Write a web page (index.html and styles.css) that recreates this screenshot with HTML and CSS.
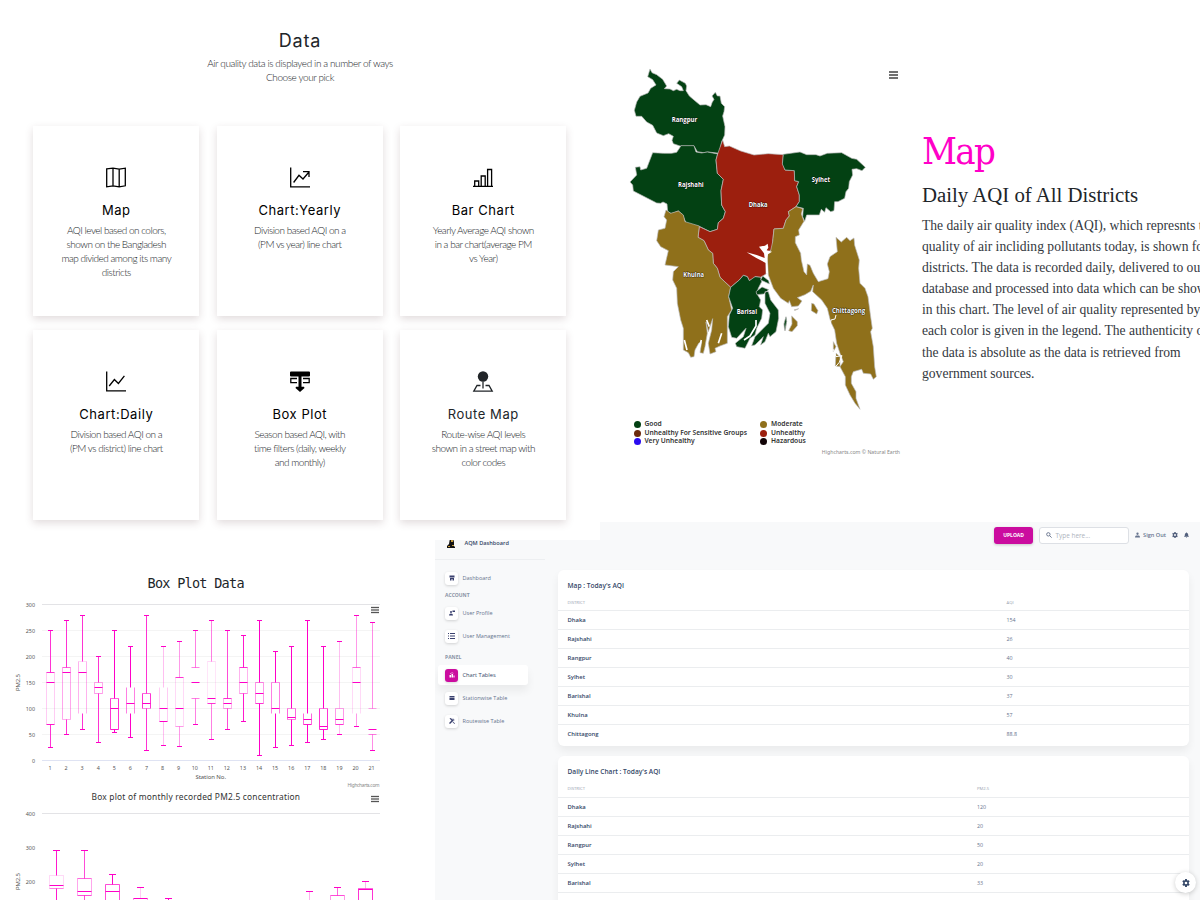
FILE: index.html
```html
<!DOCTYPE html>
<html lang="en">
<head>
<meta charset="utf-8">
<title>Air Quality</title>
<link rel="stylesheet" href="styles.css">
</head>
<body>
<main class="page">
<section class="data">
  <h1 class="data-title">Data</h1>
  <p class="data-lead">Air quality data is displayed in a number of ways<br>Choose your pick</p>
  <div class="cards">
    <article class="card"><svg class="card-icon" viewBox="0 0 20 20"><path d="M.7 1.4 7 .7l6.2 1 6.1-1v17.6l-6.1 1-6.2-1-6.3 1zM7 .7v17.6M13.2 1.7v17.6"/></svg><h2>Map</h2><p>AQI level based on colors,<br>shown on the Bangladesh<br>map divided among its many<br>districts</p></article>
    <article class="card"><svg class="card-icon" viewBox="0 0 20 20"><path d="M.7 0v19.3H20M3.6 15 9 7.8l4 3.7 6-7M13 4.2h6v5.3"/></svg><h2>Chart:Yearly</h2><p>Division based AQI on a<br>(PM vs year) line chart</p></article>
    <article class="card"><svg class="card-icon" viewBox="0 0 20 20"><path d="M0 18.8h20M1.7 18.5v-5h4v5M8.2 18.5v-10h4v10M14.6 18.5V2h4v16.5"/></svg><h2>Bar Chart</h2><p>Yearly Average AQI shown<br>in a bar chart(average PM<br>vs Year)</p></article>
    <article class="card"><svg class="card-icon" viewBox="0 0 20 20"><path d="M.7 0v19.3H20M3.2 14.5 8.4 8l4 4 6-7.6"/></svg><h2>Chart:Daily</h2><p>Division based AQI on a<br>(PM vs district) line chart</p></article>
    <article class="card"><svg class="card-icon" viewBox="0 0 20 20"><path d="M7 7H.8v4.200H7M13 7h6.200v4.200H13"/><path class="solid" d="M1 0h18q1 0 1 1v3q0 1-1 1h-7.500v10.200H14l.5 1.300L10 20.500l-4.500-4 .5-1.300h2.500V5H1Q0 5 0 4V1q0-1 1-1z"/></svg><h2>Box Plot</h2><p>Season based AQI, with<br>time filters (daily, weekly<br>and monthly)</p></article>
    <article class="card soft"><svg class="card-icon" viewBox="0 0 20 20"><circle class="solid" cx="10" cy="5" r="5.200"/><path d="M10 10v7M7.500 14H4L.8 19.600h18.400L16 14h-3.500"/></svg><h2>Route Map</h2><p>Route-wise AQI levels<br>shown in a street map with<br>color codes</p></article>
  </div>
</section>

<section class="map">
  <div class="map-figure">
    <svg class="menu" viewBox="0 0 9 8"><path d="M0 1h9M0 4h9M0 7h9"/></svg>
    <svg class="country" viewBox="0 0 840 1060">
      <path class="good" d="M83 50 90 27l6 11 14 6 18 14 12 20-7 8 17 1 10 5 10-4 10 4h10l-5-12-15-10 8-10 18 10 4 8-2 14 10 16 14 12 18 15 18-1 14 6 4-12 6-10-6-10 10-11 6 11h8l4 22 10 10-2 15-4 13 7 32-1 25-9 20-7 35-34-4-14 2-18-3-10-17h-42l-20-7-4-10 4-12-14-8-16 6-20-8-12-23-18-10-15-17H48l-5-18 7-25 10-17 24-10 8-14 16-10-10-16z"/>
      <path class="good" d="m180 262 3-5h39l6 19 17 3 17-3 31 6-5 18 4 40 18 18-7 34 2 43 11 20-6 20-15 13-3 20-22 7-30-15-40-6-12-29-13-12-20 8-12-6-2-23-12-6-7 4-12-1-70-36-2-18-8-9 20-21-4-23 14-2 2 10 18-5 18-47 32 2h25l15-3z"/>
      <path class="bad" d="M308 240 314 260 328 258 362 273 402 285 445 281 490 284 488 310 495 330 523 332 524 362 536 365 530 380 538 405 538 425 528 440 505 455 508 468 498 480 490 505 462 507 458 545 460 560 452 572 438 576 438 642 422 652 405 650 398 658 388 662 382 650 370 646 358 660 332 682 300 652 292 625 280 610 278 580 265 570 252 542 234 532 238 500 270 515 292 508 295 488 310 475 316 455 305 435 303 392 310 358 292 340 288 300 293 282 300 262Z"/>
      <g transform="translate(360)">
        <path class="good" d="M130 283 180 276 200 284 228 284 240 288 262 280 305 278 335 295 350 298 376 322 366 332 350 326 336 328 338 345 328 365 326 385 318 395 314 415 294 425 284 425 282 452 272 455 258 443 254 457 244 448 238 465 200 465 194 484 188 470 190 445 168 440 178 425 178 405 170 380 176 365 164 362 163 332 135 330 127 312Z"/>
        <path class="moderate" d="M168 440 188 446 184 462 192 484 176 510 178 525 166 530 166 548 182 580 184 600 192 635 200 645 202 612 210 616 220 640 235 665 264 656 268 635 262 612 270 590 292 575 288 532 304 546 320 532 330 542 342 534 344 556 358 600 356 625 360 670 375 685 384 710 392 770 397 805 392 815 400 860 404 920 409 950 400 958 392 942 370 940 365 928 340 935 334 950 334 970 348 995 348 1015 360 1048 345 1030 330 1005 316 975 316 950 300 920 310 905 300 880 290 850 284 810 272 785 262 745 245 720 218 695 220 675 212 694 195 704 172 713 186 723 175 738 155 740 148 722 145 730 122 715 100 685 85 645 82 600 78 580 92 572 98 545 102 507 130 505 138 480 148 468 145 455Z"/>
        <path class="moderate" d="m155 768 17 17v12l-16 18-10-3 10-20zM215 730l7 2 12 20-4 10-16-10zM280 845l8 15-8 15zM288 880l12 10v30l-14-2zM162 750l14-4-10 5z"/>
        <path class="good" d="m138 772 2 12-4 28-4-20z"/>
      </g>
      <g transform="translate(60 420)">
        <path class="moderate" d="M78 30 92 40 115 33 130 45 135 65 178 78 174 112 192 122 205 150 218 160 220 190 232 205 240 232 272 262 266 290 275 330 262 350 262 430 240 438 225 445 228 455 210 462 205 430 215 390 218 356 205 395 198 366 202 400 195 440 190 460 180 458 185 425 176 430 165 450 162 470 152 472 145 458 130 450 130 385 122 360 112 310 110 265 98 240 100 215 115 200 75 195 85 152 62 140 50 122 55 90 75 85 80 60 72 50Z"/>
        <path class="good" d="M272 262 298 240 310 226 322 230 328 242 345 230 362 232 365 245 355 265 350 280 362 300 358 320 368 330 365 355 350 385 345 405 330 415 315 445 290 440 286 430 310 410 318 385 290 415 275 412 265 380 268 345 278 325 266 290Z"/>
        <path class="good" d="M375 275 385 275 392 300 415 330 416 355 408 395 390 410 385 400 375 425 362 435 370 410 345 435 335 437 345 410 370 385 385 370 390 340 375 310ZM368 228l18 14 2 10-26-12zM348 275l18-14 20 8-15 13-20 2zM438 350l2 14-6 28-2-20z"/>
        <path class="water" d="m320 157 30 8 24 9-2-14-15-20 18-3 8-6 2 12-5 8 16 4-12 8-2 20 2 37-6-1-1-30-28-15z"/>
        <path class="creek" d="M348 360v18l-18 30-18 12M200 360l8 20M184 420l-8 30M245 400l-10 30M133 420l8 30"/>
      </g>
      <path class="creek thin" d="m648 765-3 12-12 3-2 12M640 868l8 22 18-3-8 20-12 14"/>
      <g class="labels">
        <text x="155" y="185" textLength="77" lengthAdjust="spacingAndGlyphs">Rangpur</text><text x="174" y="382" textLength="77" lengthAdjust="spacingAndGlyphs">Rajshahi</text><text x="386" y="441" textLength="57" lengthAdjust="spacingAndGlyphs">Dhaka</text><text x="575" y="367" textLength="55" lengthAdjust="spacingAndGlyphs">Sylhet</text><text x="190" y="651" textLength="62" lengthAdjust="spacingAndGlyphs">Khulna</text><text x="350" y="761" textLength="61" lengthAdjust="spacingAndGlyphs">Barisal</text><text x="636" y="759" textLength="100" lengthAdjust="spacingAndGlyphs">Chittagong</text>
      </g>
    </svg>
    <ul class="legend">
      <li><i class="dot d-good"></i>Good</li><li><i class="dot d-moderate"></i>Moderate</li>
      <li><i class="dot d-sensitive"></i>Unhealthy For Sensitive Groups</li><li><i class="dot d-bad"></i>Unhealthy</li>
      <li><i class="dot d-very"></i>Very Unhealthy</li><li><i class="dot d-hazard"></i>Hazardous</li>
    </ul>
    <p class="map-credit">Highcharts.com © Natural Earth</p>
  </div>
  <div class="map-text">
    <h2>Map</h2>
    <h3>Daily AQI of All Districts</h3>
    <p>The daily air quality index (AQI), which represnts the<br>quality of air incliding pollutants today, is shown for all<br>districts. The data is recorded daily, delivered to our<br>database and processed into data which can be shown<br>in this chart. The level of air quality represented by<br>each color is given in the legend. The authenticity of<br>the data is absolute as the data is retrieved from<br>government sources.</p>
  </div>
</section>

<section class="plots">
  <h2>Box Plot Data</h2>
  <svg class="chart" id="stations" viewBox="0 595 400 195"></svg>
  <svg class="chart" id="months" viewBox="0 790 400 110"></svg>
</section>

<section class="dash">
  <aside class="side">
    <div class="brand"><svg viewBox="0 0 8 10"><path d="M3 0h3l1 4v4l1 1v1H0V8l2-2z"/><path class="gold" d="M4 2h2v2H4zM1 8h2v1H1zM5 7h2v1H5z"/></svg><span>AQM Dashboard</span></div>
    <nav>
      <a class="item"><i class="tile"><svg viewBox="0 0 12 12"><path d="M1 1h10v4H1zM2 6h8v5H7V8H5v3H2z"/></svg></i><span>Dashboard</span></a>
      <h4>ACCOUNT</h4>
      <a class="item profile"><i class="tile"><svg viewBox="0 0 12 12"><circle cx="4" cy="4" r="2"/><path d="M0 11q0-4 4-4t4 4zM7 1h5v3H7z"/></svg></i><span>User Profile</span></a>
      <a class="item"><i class="tile"><svg class="list" viewBox="0 0 14 12"><path d="M0 0h2v2H0zM4 0h10v2H4zM0 5h2v2H0zM4 5h10v2H4zM0 10h2v2H0zM4 10h10v2H4z"/></svg></i><span>User Management</span></a>
      <h4 class="panel-head">PANEL</h4>
      <a class="item active"><i class="tile"><svg viewBox="0 0 12 12"><path d="M1 6h3v5H1zM5 4h3v7H5zM9 7h2v4H9zM2 3l4-2 3 1v1L6 2 2 4z"/></svg></i><span>Chart Tables</span></a>
      <a class="item"><i class="tile"><svg viewBox="0 0 12 12"><path d="M1 2h10v3H1zM1 6h10v4H1z"/></svg></i><span>Stationwise Table</span></a>
      <a class="item"><i class="tile"><svg viewBox="0 0 12 12"><path d="m0 10 7-7 2 2-7 7zM1 1l3-1 3 4-2 1zM8 0l1 3 3 1-3 1-2-2zM8 7l4 4-1 1-4-4z"/></svg></i><span>Routewise Table</span></a>
    </nav>
  </aside>
  <div class="content">
    <header class="bar">
      <button class="upload">UPLOAD</button>
      <div class="search"><svg viewBox="0 0 12 12"><circle cx="4.700" cy="4.700" r="3.400"/><path d="m7.300 7.300 4 4"/></svg><span>Type here...</span></div>
      <a class="sign"><svg viewBox="0 0 12 12"><circle cx="6" cy="3" r="2.800"/><path d="M0 12q0-5 3-5h6q3 0 3 5z"/></svg><span>Sign Out</span></a>
      <svg class="gear" viewBox="0 0 24 24"><path fill-rule="evenodd" d="M9.500 0h5l.7 3.400 2 1.100 3.300-1.100L23 7.700l-2.600 2.200v4.200l2.600 2.200-2.500 4.300-3.300-1.100-2 1.100-.7 3.400h-5l-.7-3.400-2-1.100-3.300 1.100L1 16.300l2.600-2.200V9.900L1 7.700l2.500-4.300 3.300 1.100 2-1.100zM12 8a4 4 0 1 0 0 8 4 4 0 0 0 0-8z"/></svg>
      <svg class="bell" viewBox="0 0 12 12"><path d="M5 0h2v1q3 .5 3 4v2l1.500 2v1H.5V9L2 7V5q0-3.500 3-4zM4.500 10.500h3q-.5 1.500-1.500 1.500t-1.500-1.500z"/></svg>
    </header>
    <section class="sheet first">
      <h3>Map : Today's AQI</h3>
      <div class="row head"><span>DISTRICT</span><span>AQI</span></div>
      <div class="row"><b>Dhaka</b><span>154</span></div><div class="row"><b>Rajshahi</b><span>26</span></div><div class="row"><b>Rangpur</b><span>40</span></div><div class="row"><b>Sylhet</b><span>30</span></div><div class="row"><b>Barishal</b><span>37</span></div><div class="row"><b>Khulna</b><span>57</span></div><div class="row"><b>Chittagong</b><span>88.8</span></div>
    </section>
    <section class="sheet second">
      <h3>Daily Line Chart : Today's AQI</h3>
      <div class="row head"><span>DISTRICT</span><span>PM2.5</span></div>
      <div class="row"><b>Dhaka</b><span>120</span></div><div class="row"><b>Rajshahi</b><span>20</span></div><div class="row"><b>Rangpur</b><span>50</span></div><div class="row"><b>Sylhet</b><span>20</span></div><div class="row"><b>Barishal</b><span>33</span></div><div class="row"><b>Khulna</b><span>40</span></div>
    </section>
  </div>
  <div class="fab"><svg class="gear" viewBox="0 0 24 24"><path fill-rule="evenodd" d="M9.500 0h5l.7 3.400 2 1.100 3.300-1.100L23 7.700l-2.600 2.200v4.200l2.600 2.200-2.500 4.300-3.300-1.100-2 1.100-.7 3.400h-5l-.7-3.400-2-1.100-3.300 1.100L1 16.300l2.600-2.200V9.900L1 7.700l2.500-4.300 3.300 1.100 2-1.100zM12 8a4 4 0 1 0 0 8 4 4 0 0 0 0-8z"/></svg></div>
</section>
</main>
<script src="charts.js"></script>
</body>
</html>
```
FILE: styles.css
```css
* { box-sizing: border-box; }
body { margin: 0; background: #fff; overflow: hidden; }
h1, h2, h3, h4, p, ul { margin: 0; padding: 0; font-weight: 400; }
svg { display: block; }
.page { display: grid; grid-template-columns: 435px 165px 600px; grid-template-rows: 522px 18px 360px; width: 1200px; height: 900px; overflow: hidden; }

.data { grid-area: 1 / 1 / 3 / 3; z-index: 1; background: #fff; text-align: center; padding-top: 29px; overflow: hidden; }
.data-title { font: 400 18px/24px Inter, sans-serif; letter-spacing: .8px; color: #212529; }
.data-lead { font: 300 10px/14px Lato, sans-serif; color: #212529; margin-top: 3px; letter-spacing: -.41px; }
.cards { display: grid; grid-template-columns: repeat(3, 166px); grid-auto-rows: 190px; gap: 14px 17.5px; padding: 42px 0 0 33.3px; }
.card { background: #fff; box-shadow: 0 3px 8px rgba(80, 40, 50, .17); display: flex; flex-direction: column; align-items: center; padding-top: 41px; }
.card-icon { width: 20px; height: 21px; fill: none; stroke: #000; stroke-width: 1.3; overflow: visible; }
.card-icon .solid { fill: #000; stroke: none; }
.soft .card-icon { stroke: #212529; }
.soft .card-icon .solid { fill: #212529; }
.card h2 { font: 400 13px/18px Inter, sans-serif; letter-spacing: .55px; margin-top: 12.5px; color: #000; }
.card.soft h2 { color: #212529; }
.card p { font: 300 10px/14px Lato, sans-serif; letter-spacing: -.5px; color: #212529; margin-top: 4px; }

.map { grid-area: 1 / 3; display: flex; background: #fff; overflow: hidden; }
.map-figure { position: relative; width: 322px; flex: none; padding: 60px 0 0 20px; }
.menu { position: absolute; left: 289px; top: 71px; width: 9px; height: 8px; stroke: #444; stroke-width: 1.5; }
.country { width: 280px; height: 353.3px; overflow: visible; }
.country path { stroke: #bbb; stroke-width: 2; stroke-linejoin: round; }
.country .good { fill: #034113; }
.country .moderate { fill: #8f701b; }
.country .bad { fill: #9c1f0e; }
.country .water { fill: #fff; stroke: none; }
.country .creek { fill: none; stroke: #fff; stroke-width: 5; }
.country .thin { stroke-width: 3; }
.labels text { font: 700 20px "Open Sans", sans-serif; fill: #fff; stroke: #000; stroke-width: 2px; paint-order: stroke; }
.legend { list-style: none; display: grid; grid-template-columns: 126.5px 80px; grid-auto-rows: 8.5px; margin: 7px 0 0 13.5px; font: 600 6.7px/8.5px "Noto Sans", sans-serif; color: #333; white-space: nowrap; }
.legend li { display: flex; align-items: center; gap: 4px; }
.dot { width: 7px; height: 7px; border-radius: 50%; }
.d-good { background: #034113; } .d-moderate { background: #8f701b; } .d-sensitive { background: #6b2a0c; }
.d-bad { background: #9c1f0e; } .d-very { background: #2a0cf0; } .d-hazard { background: #120407; }
.map-credit { font: 5.2px/8px "Noto Sans", sans-serif; color: #888; text-align: right; margin: 2px 22px 0 0; white-space: nowrap; }
.map-text { padding-top: 128px; white-space: nowrap; }
.map-text h2 { font: 38px/46px "DejaVu Serif Condensed", "DejaVu Serif", serif; letter-spacing: -1.7px; color: #ff00c8; }
.map-text h3 { font: 20.8px/28px "Liberation Serif", serif; color: #212529; margin-top: 7px; }
.map-text p { font: 13.6px/21.1px "Liberation Serif", serif; color: #33383e; margin-top: 6px; }

.plots { grid-area: 3 / 1; z-index: 1; background: #fff; padding-top: 33px; overflow: hidden; }
.plots h2 { font: 13.5px/20px "DejaVu Sans Mono", monospace; letter-spacing: -.72px; color: #212529; padding-left: 147.5px; }
.chart { width: 400px; margin-top: 2px; }
.chart + .chart { margin-top: 0; }
.chart text { font-family: "Noto Sans", sans-serif; fill: #555; }
.chart .tick { font-size: 5.4px; }
.chart .axis { font-size: 6px; }
.chart .credit { font-size: 4.8px; fill: #888; }
.chart .caption { font-size: 8.4px; fill: #333; }
.chart .grid { stroke: #f4f4f4; }
.chart .edge { stroke: #e3e3e6; }
.chart .base { stroke: #dfe3f3; }
.chart .box { stroke: #ff00c8; fill: none; }
.chart .burger { stroke: #555; stroke-width: 1.3; }

.dash { grid-area: 1 / 1 / 4 / 4; margin: 522px 0 0 435px; position: relative; z-index: 0; display: flex; background: #f8f9fa; font-family: "Open Sans", sans-serif; overflow: hidden; color: #344767; }
.side { width: 110px; flex: none; padding: 17px 0 0 8px; }
.brand { display: flex; align-items: center; gap: 9.5px; height: 21px; margin-left: -8px; padding: 0 0 12px 12px; border-bottom: 1px solid #edeff1; font: 600 5.6px/9px "Open Sans", sans-serif; white-space: nowrap; }
.brand svg { width: 8px; height: 10px; fill: #111; }
.brand .gold { fill: #c49a3a; }
nav { padding-top: 8px; }
.item { display: flex; align-items: center; height: 20px; margin: 0 0 3px; padding-left: 2px; gap: 4.5px; font-size: 5.5px; color: #67748e; white-space: nowrap; width: 90px; border-radius: 3px; }
.tile { display: grid; place-items: center; width: 13px; height: 13px; border-radius: 3px; background: #fff; box-shadow: 0 1px 3px rgba(0, 0, 0, .16); }
.tile svg { width: 6px; height: 6px; fill: #3a416f; }
.tile .list { width: 7px; }
.profile { margin-top: 4px; }
.side h4 { font-size: 5px; font-weight: 700; line-height: 8px; padding-left: 2px; color: #8a93a5; }
.side .panel-head { margin: 7px 0 4px; }
.side .active { background: #fff; color: #344767; box-shadow: 0 6px 9px rgba(0, 0, 0, .06); width: 93px; margin-left: -8px; padding-left: 10px; font-size: 5.7px; }
.side .active { width: 90px; margin-left: -5px; padding-left: 7px; }
.active .tile { background: #cb0c9f; }
.active .tile svg { fill: #fff; }
.content { width: 644px; flex: none; padding: 4.5px 0 0 12.5px; }
.bar { display: flex; align-items: center; justify-content: flex-end; height: 17px; color: #67748e; font-size: 6.2px; }
.upload { width: 39px; height: 17px; border: 0; border-radius: 3px; padding: 0; background: #cb0c9f; color: #fff; font: 700 5px/17px "Open Sans", sans-serif; box-shadow: 0 1px 3px rgba(0, 0, 0, .2); }
.search { display: flex; align-items: center; gap: 4px; width: 90px; height: 17px; margin: 0 6px; padding-left: 5.5px; border: 1px solid #dde0e5; border-radius: 3px; background: #fff; color: #adb3bd; font-size: 6.4px; }
.search svg { width: 6px; height: 6px; fill: none; stroke: #53617d; stroke-width: 1.6; }
.sign { display: flex; align-items: center; gap: 3px; white-space: nowrap; font-weight: 600; font-size: 5.6px; }
.sign svg { width: 5px; height: 6px; fill: #67748e; }
.bar .gear { width: 6px; height: 6px; margin: 0 6px; fill: #53617d; }
.bell { width: 5px; height: 6px; fill: #53617d; }
.sheet { background: #fff; border-radius: 6px; box-shadow: 0 5px 9px rgba(0, 0, 0, .06); height: 176px; margin-top: 26.5px; padding-top: 10.5px; }
.sheet h3 { font-size: 6.6px; font-weight: 600; line-height: 10px; padding-left: 10px; }
.row { display: grid; grid-template-columns: 439px auto; align-items: center; height: 18.95px; padding: 1px 0 0 10px; border-top: 1px solid #ebedef; font-size: 5.3px; color: #67748e; }
.row b { font-weight: 600; font-size: 5.9px; color: #344767; }
.row.head { border: 0; height: 19.5px; font-size: 4.2px; color: #98a1b0; padding-top: 9px; align-items: start; }
.second { height: 220px; margin-top: 10px; }
.second .row { grid-template-columns: 409.5px auto; }
.second .head { height: 20.5px; }
.fab { position: absolute; left: 740px; top: 350px; width: 21px; height: 21px; border-radius: 50%; background: #fff; display: grid; place-items: center; box-shadow: 0 1px 5px rgba(0, 0, 0, .2); }
.fab .gear { width: 8px; height: 8px; fill: #344767; }
```
FILE: charts.js
```js
const line = (x1, y1, x2, y2, cls, op = 1) =>
  `<line x1="${x1}" y1="${y1}" x2="${x2}" y2="${y2}" class="${cls}" opacity="${op}"/>`;
const label = (x, y, s, cls, width, anchor = "start", extra = "") =>
  `<text x="${x}" y="${y}" class="${cls}" text-anchor="${anchor}"${width ? ` textLength="${width}"` : ""} ${extra}>${s}</text>`;
const burger = y => [0, 2.5, 5].map(d => line(371, y + d, 379, y + d, "burger")).join("");

// low, q1, median, q3, high, stem opacity, side opacity, top opacity, bottom opacity
function box(x, w, cap, yOf, d) {
  const [lo, q1, med, q3, hi, stem = 1, side = .3, top = .7, bottom = .7] = d;
  return line(x, yOf(hi), x, yOf(q3), "box", stem) + line(x, yOf(q1), x, yOf(lo), "box", stem) +
    line(x - cap, yOf(hi), x + cap, yOf(hi), "box") + line(x - cap, yOf(lo), x + cap, yOf(lo), "box") +
    line(x - w, yOf(q3), x + w, yOf(q3), "box", top) + line(x - w, yOf(q1), x + w, yOf(q1), "box", bottom) +
    line(x - w, yOf(q3), x - w, yOf(q1), "box", side) + line(x + w, yOf(q3), x + w, yOf(q1), "box", side) +
    line(x - w, yOf(med), x + w, yOf(med), "box");
}

const stations = [
  [25,70,150,170,250,.8,.2,.8,.9],[50,80,170,180,270,.8,.35,.6,.3],[60,90,170,190,280,.8,.3,.15,0],
  [35,130,140,150,200,.8,.35,.35,.4],[55,60,100,120,250,1,.8,.6,.9],[45,90,110,140,220,1,.5,0,0],
  [20,100,110,130,280,.8,.8,.6,.4],[30,75,100,140,220,.25,.2,0,1],[27,65,100,160,230,.4,.15,.8,.4],
  [70,120,150,180,250,.5,0,.5,.5],[40,110,120,190,270,.5,.1,.15,.8],[60,100,110,120,250,.7,.3,.8,.4],
  [75,130,150,180,240,.9,.3,.8,.5],[10,110,130,150,270,1,.4,.5,.8],[25,90,100,150,210,1,.5,.4,0],
  [30,80,83,100,220,1,.6,.4,.5],[35,70,80,90,270,1,.6,0,.9],[40,60,65,100,220,1,.8,.5,.9],
  [50,70,80,100,230,.25,.4,.35,.8],[65,90,150,180,280,.4,.15,.6,0],[20,50,60,100,265,.45,0,.35,.5]];
const y1 = v => +(760.5 - v * .52).toFixed(1);
const snap = v => Math.round(y1(v) - .3) + .5;
let s = "";
for (let v = 0; v <= 300; v += 50) {
  s += line(42, snap(v), 380, snap(v), v === 0 ? "base" : v === 300 ? "edge" : "grid");
  s += label(35, y1(v) + 2, v, "tick", 0, "end");
}
stations.forEach((d, i) => {
  const x = 50.5 + Math.round(16.08 * i);
  s += box(x, 4, 2.5, snap, d) + label(50 + 16.08 * i, 770, i + 1, "tick", 0, "middle");
});
s += label(195.5, 779, "Station No.", "axis", 30.5) +
  label(0, 0, "PM2.5", "axis", 17, "start", 'transform="translate(19.5 691) rotate(-90)"') +
  label(347.5, 786.5, "Highcharts.com", "credit", 32) + burger(607.5);
document.getElementById("stations").innerHTML = s;

const months = { 0: [80,180,190,220,292,.9,.15,.15,.5], 1: [80,160,171,210,292,.7,.35,.6,.7],
  2: [60,120,171,192,221,1,.7,.7,.7], 3: [50,90,120,151,182,.2,.4,1,.5], 4: [40,80,100,130,151],
  9: [40,80,100,130,171,.3], 10: [50,100,130,160,182,.6,.4,.7,.5], 11: [60,110,178,180,200,.3,.8,.6,.5] };
const y2 = v => Math.round(949.3 - v * .34) + .5;
s = label(91.5, 800, "Box plot of monthly recorded PM2.5 concentration", "caption", 208.5) + burger(796.5);
s += line(42, 813.5, 380, 813.5, "edge");
for (const v of [400, 300, 200]) s += label(35, y2(v) + 2, v, "tick", 0, "end");
for (const i in months) s += box(Math.floor(56.3 + 28.15 * i) + .5, 7, 3.5, y2, months[i]);
s += label(0, 0, "PM2.5", "axis", 17, "start", 'transform="translate(19.5 890) rotate(-90)"');
document.getElementById("months").innerHTML = s;
```
